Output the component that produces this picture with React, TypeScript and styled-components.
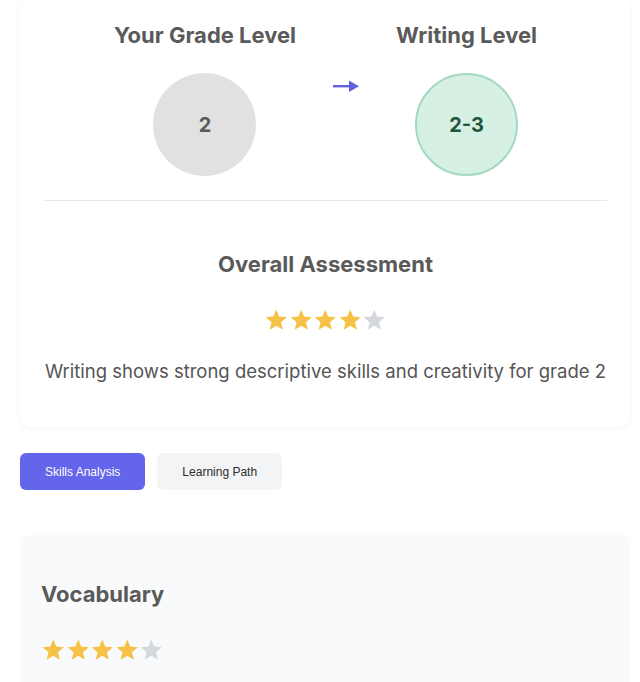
import styled, { createGlobalStyle } from 'styled-components';

const GlobalStyle = createGlobalStyle`
  * {
    box-sizing: border-box;
  }

  body {
    margin: 0;
    background: #ffffff;
    font-family: Inter, 'Noto Sans', sans-serif;
  }
`;

const STAR_COLOR = '#f5c146';
const STAR_EMPTY = '#d5d8dc';

const Star = ({ filled }: { filled: boolean }) => (
  <svg width="24.5" height="24" viewBox="0 0 24 24">
    <polygon
      points="12,1.5 14.9,8.6 22.6,9.2 16.7,14.2 18.6,21.8 12,17.7 5.4,21.8 7.3,14.2 1.4,9.2 9.1,8.6"
      fill={filled ? STAR_COLOR : STAR_EMPTY}
    />
  </svg>
);

const Stars = ({ rating, $center }: { rating: number; $center?: boolean }) => (
  <StarRow $center={$center}>
    {[0, 1, 2, 3, 4].map((i) => (
      <Star key={i} filled={i < rating} />
    ))}
  </StarRow>
);

const ArrowIcon = () => (
  <svg width="26" height="14" viewBox="0 0 26 14">
    <rect x="0" y="6" width="18" height="2.4" fill="#6361e0" />
    <polygon points="16,1.5 26,7.2 16,12.9" fill="#6361e0" />
  </svg>
);

const App = () => {
  return (
    <>
      <GlobalStyle />
      <Page>
        <ResultCard>
          <LevelRow>
            <LevelColumn>
              <LevelTitle>Your Grade Level</LevelTitle>
              <LevelCircle $variant="grade">2</LevelCircle>
            </LevelColumn>
            <ArrowWrap>
              <ArrowIcon />
            </ArrowWrap>
            <LevelColumn>
              <LevelTitle>Writing Level</LevelTitle>
              <LevelCircle $variant="writing">2-3</LevelCircle>
            </LevelColumn>
          </LevelRow>
          <Assessment>
            <SectionTitle>Overall Assessment</SectionTitle>
            <Stars rating={4} $center />
            <Summary>Writing shows strong descriptive skills and creativity for grade 2</Summary>
          </Assessment>
        </ResultCard>

        <TabBar>
          <TabButton $active>Skills Analysis</TabButton>
          <TabButton>Learning Path</TabButton>
        </TabBar>

        <SkillPanel>
          <SkillTitle>Vocabulary</SkillTitle>
          <Stars rating={4} />
        </SkillPanel>
      </Page>
    </>
  );
};

export default App;

const Page = styled.div`
  display: flex;
  flex-direction: column;
  padding: 0 10px 0 20px;
`;

const ResultCard = styled.div`
  padding: 21px 23px 42px 24px;

  background: #ffffff;
  border-radius: 0 0 12px 12px;
  box-shadow: 0 2px 6px rgba(0, 0, 0, 0.04);
`;

const LevelRow = styled.div`
  display: flex;
  gap: 37px;
  align-items: flex-start;
  justify-content: center;
  padding-bottom: 24px;

  border-bottom: 1px solid #e7e8ea;
`;

const LevelColumn = styled.div`
  display: flex;
  flex-direction: column;
  gap: 24px;
  align-items: center;
`;

const LevelTitle = styled.h3`
  margin: 0;

  color: #5a5a5a;
  font-size: 22px;
  font-weight: 700;
  line-height: 28px;
`;

const LevelCircle = styled.div<{ $variant: 'grade' | 'writing' }>`
  display: flex;
  align-items: center;
  justify-content: center;
  width: 103px;
  height: 103px;

  border-radius: 50%;
  background: ${({ $variant }) => ($variant === 'grade' ? '#e1e1e1' : '#d7f0e4')};
  border: ${({ $variant }) => ($variant === 'grade' ? 'none' : '2px solid #a3d9bf')};
  color: ${({ $variant }) => ($variant === 'grade' ? '#5a5a5a' : '#22553e')};
  font-size: 20px;
  font-weight: 700;
`;

const ArrowWrap = styled.div`
  display: flex;
  margin-top: 58px;
`;

const Assessment = styled.div`
  display: flex;
  flex-direction: column;
  align-items: center;
  padding-top: 49px;
`;

const SectionTitle = styled.h3`
  margin: 0 0 30px 0;

  color: #5a5a5a;
  font-size: 22px;
  font-weight: 700;
  line-height: 28px;
`;

const StarRow = styled.div<{ $center?: boolean }>`
  display: flex;
  justify-content: ${({ $center }) => ($center ? 'center' : 'flex-start')};
  height: 24px;
`;

const Summary = styled.p`
  margin: 26px 0 0 0;

  color: #555555;
  font-size: 18.5px;
  line-height: 27px;
  text-align: center;
`;

const TabBar = styled.div`
  display: flex;
  gap: 12px;
  margin-top: 26px;
`;

const TabButton = styled.button<{ $active?: boolean }>`
  height: 37px;
  padding: 0 25px;

  border: none;
  border-radius: 6px;
  background: ${({ $active }) => ($active ? '#6365ea' : '#f3f4f6')};
  color: ${({ $active }) => ($active ? '#ffffff' : '#2b2b2b')};
  font-family: 'Liberation Sans', Arial, sans-serif;
  font-size: 12px;
  cursor: pointer;
`;

const SkillPanel = styled.div`
  display: flex;
  flex-direction: column;
  gap: 30px;
  margin-top: 45px;
  padding: 45px 21px 40px 21px;

  background: #f9fafb;
  border-radius: 8px 8px 0 0;
`;

const SkillTitle = styled.h4`
  margin: 0;

  color: #5a5a5a;
  font-size: 22px;
  font-weight: 700;
  line-height: 28px;
`;
